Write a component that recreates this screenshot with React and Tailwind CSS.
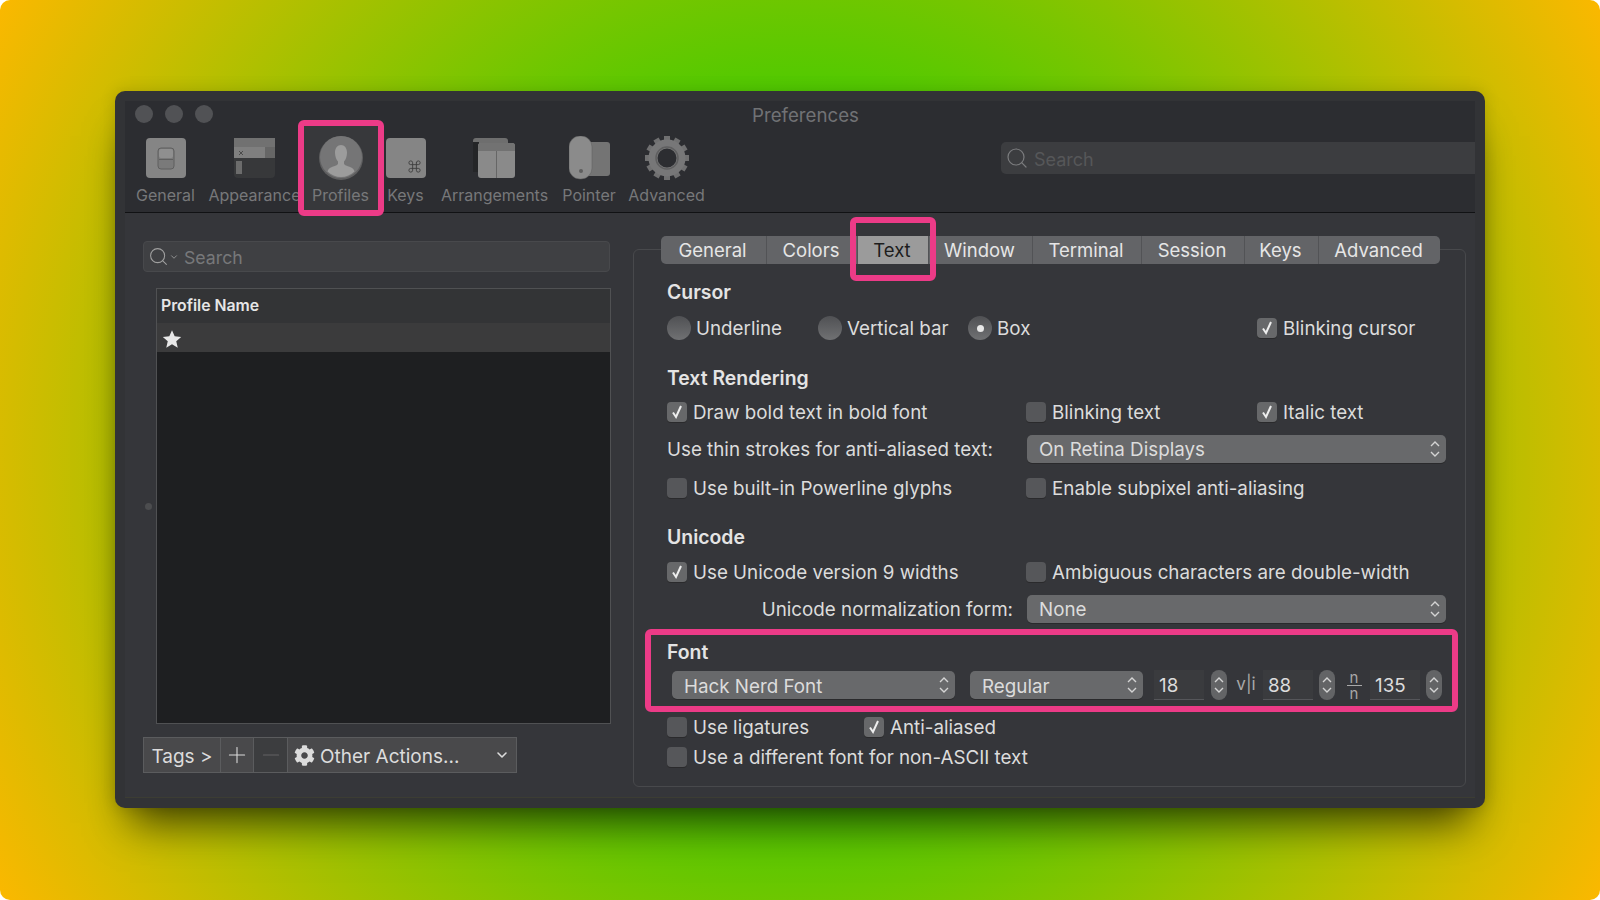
import React from 'react';
import { Command, Search, Plus, Minus, ChevronDown } from 'lucide-react';
import { FaCog } from 'react-icons/fa';

const GeneralIcon = () => (
  <svg width="40" height="40" viewBox="0 0 40 40">
    <rect width="40" height="40" rx="4" fill="#858585" />
    <rect x="12" y="10" width="16" height="21" rx="3" fill="#7a7a7a" stroke="#5f5f5f" />
    <rect x="13" y="11" width="14" height="9" rx="2" fill="#8f8f8f" />
    <rect x="13" y="21" width="14" height="1" fill="#5f5f5f" />
  </svg>
);

const AppearanceIcon = () => (
  <svg width="41" height="40" viewBox="0 0 41 40">
    <rect width="41" height="40" rx="4" fill="#37383a" />
    <path d="M0 20V4a4 4 0 0 1 4-4h33a4 4 0 0 1 4 4v16z" fill="#7f7f7f" />
    <rect y="0" width="41" height="9" fill="#717171" />
    <rect x="31" y="9" width="10" height="11" fill="#666" />
    <path d="M5 13l4 4M9 13l-4 4" stroke="#4a4a4a" />
    <rect x="2" y="23" width="6" height="13" fill="#6c6c6c" />
  </svg>
);

const ProfileIcon = () => (
  <svg width="44" height="44" viewBox="0 0 44 44">
    <circle cx="22" cy="22" r="22" fill="#5f5f60" />
    <circle cx="22" cy="21" r="21" fill="#757576" />
    <path d="M22 9c3.500 0 6 3 6 7.500 0 3.500-1 7-3 9v2c0 1.500 3 2.500 6 3.500 2.500 1 4 2 4.500 4.500C32 39 27 41 22 41s-10-2-13.500-5.500c.5-2.500 2-3.500 4.500-4.500 3-1 6-2 6-3.500v-2c-2-2-3-5.500-3-9C16 12 18.500 9 22 9z" fill="#9c9c9c" />
  </svg>
);

const KeysIcon = () => (
  <div className="w-10 h-10 rounded bg-[#858585] flex items-end justify-end pr-1 pb-1">
    <Command size={15} strokeWidth={1.4} className="text-[#3d3d3d]" />
  </div>
);

const ArrangementsIcon = () => (
  <svg width="43" height="40" viewBox="0 0 43 40">
    <rect x="0" y="0" width="35" height="34" rx="3" fill="#6e6e6e" />
    <rect x="0" y="4" width="6" height="30" fill="#242527" />
    <rect x="5" y="5" width="37" height="35" rx="3" fill="#8a8a8a" />
    <path d="M5 8a3 3 0 0 1 3-3h31a3 3 0 0 1 3 3v5H5z" fill="#727272" />
    <rect x="23" y="13" width="1" height="27" fill="#666" />
  </svg>
);

const PointerIcon = () => (
  <svg width="41" height="44" viewBox="0 0 41 44">
    <rect x="16" y="6" width="25" height="34" rx="3" fill="#747474" />
    <rect x="0" y="0" width="23" height="43" rx="11" fill="#8b8b8b" stroke="#5e5e5e" strokeWidth="0.5" />
    <circle cx="12" cy="35" r="2" fill="#5e5e5e" />
  </svg>
);

const GearIcon = () => (
  <svg width="44" height="44" viewBox="0 0 44 44">
    {[0, 30, 60, 90, 120, 150, 180, 210, 240, 270, 300, 330].map((deg) => (
      <rect key={deg} x="19" y="0" width="6" height="9" fill="#707071" transform={`rotate(${deg} 22 22)`} />
    ))}
    <circle cx="22" cy="22" r="14" fill="none" stroke="#777778" strokeWidth="9" />
    <circle cx="22" cy="22" r="11" fill="none" stroke="#5f5f60" strokeWidth="1.5" />
  </svg>
);

const toolbarItems = [
  { label: 'General', width: 'w-[71px]', icon: GeneralIcon },
  { label: 'Appearance', width: 'w-[107px]', icon: AppearanceIcon },
  { label: 'Profiles', width: 'w-[75px] -mx-[5px] bg-[#37383b]', icon: ProfileIcon },
  { label: 'Keys', width: 'w-[65px]', icon: KeysIcon },
  { label: 'Arrangements', width: 'w-[113px]', icon: ArrangementsIcon },
  { label: 'Pointer', width: 'w-[76px]', icon: PointerIcon },
  { label: 'Advanced', width: 'w-[79px]', icon: GearIcon },
];

const tabs = [
  { label: 'General', width: 'w-[105px]' },
  { label: 'Colors', width: 'w-[91px]' },
  { label: 'Text', width: 'w-[71px]', active: true },
  { label: 'Window', width: 'w-[104px]' },
  { label: 'Terminal', width: 'w-[109px]' },
  { label: 'Session', width: 'w-[103px]' },
  { label: 'Keys', width: 'w-[74px]' },
  { label: 'Advanced', width: 'w-[122px]' },
];

const Carets = () => (
  <svg width="12" height="20" viewBox="0 0 12 20" fill="none" stroke="#d4d4d4" strokeWidth="1.4">
    <path d="M2 7l4-4 4 4M2 13l4 4 4-4" />
  </svg>
);

const Box = ({ checked }) => (
  <div className={`w-5 h-5 shrink-0 rounded-[4px] flex items-center justify-center shadow-[0_1px_0_#2a2a2c] ${checked ? 'bg-[#67686a]' : 'bg-[#56575a]'}`}>
    {checked && (
      <svg width="12" height="16" viewBox="0 0 12 16" fill="none" stroke="#eeeeee" strokeWidth="2">
        <path d="M2 8.500l3 4.500L10 2" />
      </svg>
    )}
  </div>
);

const CheckItem = ({ label, checked, width }) => (
  <div className={`flex items-center gap-[6px] ${width}`}>
    <Box checked={checked} />
    <span className="pt-[2px] whitespace-nowrap">{label}</span>
  </div>
);

const Radio = ({ label, checked, width }) => (
  <div className={`flex items-center gap-[5px] ${width}`}>
    <div className="w-6 h-6 shrink-0 rounded-full bg-gradient-to-b from-[#505154] to-[#707173] flex items-center justify-center">
      {checked && <div className="w-[7px] h-[7px] rounded-full bg-[#e8e8e8]" />}
    </div>
    <span className="pt-[2px] whitespace-nowrap">{label}</span>
  </div>
);

const Select = ({ label, width, textPad = 'pt-[2px]' }) => (
  <div className={`h-7 shrink-0 rounded-[5px] bg-[#68696b] shadow-[0_1px_0_#2a2a2c] flex items-center justify-between pl-3 pr-[5px] ${width}`}>
    <span className={`whitespace-nowrap ${textPad}`}>{label}</span>
    <Carets />
  </div>
);

const Stepper = () => (
  <div className="w-4 h-[30px] shrink-0 rounded-full bg-[#636466] flex items-center justify-center">
    <Carets />
  </div>
);

const Field = ({ value }) => (
  <div className="w-[50px] h-[30px] shrink-0 bg-[#3a3b3e] border-b border-[#55565a] pl-[5px] pt-[4px] flex items-center">{value}</div>
);

const Heading = ({ children, className }) => (
  <div className={`h-6 pt-[2px] flex items-center font-semibold text-[19.400px] text-[#e4e4e4] ${className}`}>{children}</div>
);

const Row = ({ children, className }) => (
  <div className={`h-6 flex items-center ${className}`}>{children}</div>
);

const Highlight = ({ className }) => (
  <div className={`absolute border-[6px] border-[#ec3b87] rounded-[6px] ${className}`} />
);

export default function App() {
  return (
    <div className="w-[1600px] h-[900px] bg-white">
      <div
        className="w-full h-full overflow-hidden rounded-[10px] pt-[91px] pl-[115px] bg-[radial-gradient(circle_at_center,#00d200_10%,#fbb800_100%)]"
        style={{ fontFamily: 'Inter, "Noto Sans", sans-serif' }}
      >
        <div className="relative w-[1370px] h-[717px] rounded-[10px] bg-[#323336] pt-[10px] px-[10px] shadow-[0_30px_40px_-15px_rgba(0,0,0,0.65),0_0_16px_rgba(0,0,0,0.15)]">
          {/* Toolbar */}
          <div className="h-[112px] bg-[#2c2d31] border-b border-[#111214]">
            <div className="h-[25px] flex items-center pl-[10px]">
              <div className="flex gap-3">
                <div className="w-[18px] h-[18px] rounded-full bg-[#515255]" />
                <div className="w-[18px] h-[18px] rounded-full bg-[#515255]" />
                <div className="w-[18px] h-[18px] rounded-full bg-[#515255]" />
              </div>
              <div className="ml-[539px] pt-[6px] text-[#717275] text-[18.700px]">Preferences</div>
            </div>
            <div className="flex items-start pl-[5px]">
              {toolbarItems.map((item) => {
                const Icon = item.icon;
                return (
                  <div key={item.label} className={`h-[84px] shrink-0 flex flex-col items-center ${item.width}`}>
                    <div className="h-11 mt-[10px] flex items-center">
                      <Icon />
                    </div>
                    <div className="mt-[5px] text-[16px] leading-5 text-[#77787a] whitespace-nowrap">{item.label}</div>
                  </div>
                );
              })}
              <div className="ml-auto mt-4 w-[474px] h-8 rounded-l-[5px] bg-[#3c3d40] flex items-center pl-1 gap-[5px] text-[#565759] text-[18px]">
                <Search size={24} strokeWidth={1.2} className="text-[#7b7c7e]" />
                <span className="pt-[2px]">Search</span>
              </div>
            </div>
          </div>

          {/* Content */}
          <div className="h-[585px] flex bg-[#35363a] border-b border-[#3c3d33]">
            <div className="w-[508px] shrink-0 pl-[18px] pt-[28px]">
              <div className="w-[467px] h-[31px] rounded-[4px] bg-[#3f4043] border border-[#48494c] flex items-center pl-1 text-[#77787a] text-[17.700px]">
                <Search size={21} strokeWidth={1.2} className="text-[#a0a0a0]" />
                <ChevronDown size={10} className="text-[#a0a0a0] mr-[5px]" />
                <span className="pt-[4px]">Search</span>
              </div>

              <div className="mt-4 flex items-center">
                <div className="w-[13px]">
                  <div className="w-[7px] h-[7px] rounded-full bg-[#4c4d4f] ml-[2px]" />
                </div>
                <div className="w-[455px] h-[436px] bg-[#1e1f21] border border-[#505153]">
                  <div className="h-[34px] bg-[#333436] flex items-center pl-[4px] pb-[1px] text-[#e6e6e6] text-[15.800px] font-semibold">
                    Profile Name
                  </div>
                  <div className="h-[29px] bg-[#3b3b3c] flex items-center pl-[5px] pt-[3px]">
                    <svg width="20" height="20" viewBox="0 0 24 24" fill="#e8e8e8">
                      <path d="M12 1.500l3.200 7.200 7.800.8-5.900 5.200 1.800 7.700L12 18.300l-6.900 4.100 1.800-7.700L1 9.500l7.800-.8z" />
                    </svg>
                  </div>
                </div>
              </div>

              <div className="mt-[13px] flex h-9 text-[19px] text-[#dcdcdc]">
                <div className="w-[78px] pt-[4px] bg-[#49494b] border border-[#5b5c5e] flex items-center justify-center">Tags &gt;</div>
                <div className="w-[33px] bg-[#49494b] border border-l-0 border-[#5b5c5e] flex items-center justify-center">
                  <Plus size={26} strokeWidth={1} />
                </div>
                <div className="w-[34px] bg-[#3c3d3f] border border-l-0 border-[#5b5c5e] flex items-center justify-center">
                  <Minus size={26} strokeWidth={1} className="text-[#626365]" />
                </div>
                <div className="w-[229px] bg-[#49494b] border border-l-0 border-[#5b5c5e] flex items-center pl-[6px] pr-[6px]">
                  <FaCog size={21} />
                  <span className="ml-[5px] pt-[4px]">Other Actions...</span>
                  <ChevronDown size={16} strokeWidth={2.4} className="ml-auto" />
                </div>
              </div>
            </div>

            {/* Text settings */}
            <div className="w-[833px] h-[538px] mt-[36px] rounded-[6px] border border-[#48494c] text-[18.800px] text-[#dcdcdc] pl-[33px]">
              <div className="-mt-[14px] -ml-[6px] w-fit flex h-7 rounded-[5px] overflow-hidden bg-[#636467] text-[#e6e6e6] text-[18.500px]">
                {tabs.map((tab, i) => (
                  <div
                    key={tab.label}
                    className={`flex items-center justify-center pt-[2px] pr-[2px] ${tab.width} ${tab.active ? 'bg-[#9b9b9b] text-[#1d1d1d]' : ''} ${i > 0 ? 'border-l border-[#525356]' : ''}`}
                  >
                    {tab.label}
                  </div>
                ))}
              </div>

              <Heading className="mt-4">Cursor</Heading>
              <Row className="mt-3">
                <Radio label="Underline" width="w-[151px]" />
                <Radio label="Vertical bar" width="w-[150px]" />
                <Radio label="Box" checked width="w-[289px]" />
                <CheckItem label="Blinking cursor" checked />
              </Row>

              <Heading className="mt-[26px]">Text Rendering</Heading>
              <Row className="mt-[10px]">
                <CheckItem label="Draw bold text in bold font" checked width="w-[359px]" />
                <CheckItem label="Blinking text" width="w-[231px]" />
                <CheckItem label="Italic text" checked />
              </Row>
              <Row className="mt-[13px]">
                <div className="w-[360px] pt-[2px] whitespace-nowrap">Use thin strokes for anti-aliased text:</div>
                <Select label="On Retina Displays" width="w-[419px]" />
              </Row>
              <Row className="mt-[15px]">
                <CheckItem label="Use built-in Powerline glyphs" width="w-[359px]" />
                <CheckItem label="Enable subpixel anti-aliasing" />
              </Row>

              <Heading className="mt-[25px]">Unicode</Heading>
              <Row className="mt-[11px]">
                <CheckItem label="Use Unicode version 9 widths" checked width="w-[359px]" />
                <CheckItem label="Ambiguous characters are double-width" />
              </Row>
              <Row className="mt-[13px]">
                <div className="w-[346px] pt-[2px] text-right whitespace-nowrap">Unicode normalization form:</div>
                <Select label="None" width="w-[419px] ml-[14px]" />
              </Row>

              <Heading className="mt-[19px]">Font</Heading>
              <Row className="mt-[9px] pl-[5px]">
                <Select label="Hack Nerd Font" width="w-[283px]" textPad="pt-[4px]" />
                <Select label="Regular" width="w-[173px] ml-[15px]" textPad="pt-[4px]" />
                <div className="ml-[11px]"><Field value="18" /></div>
                <div className="ml-[7px]"><Stepper /></div>
                <div className="w-[36px] pl-[2px] text-center text-[17px] text-[#a8a8a8]">v|i</div>
                <Field value="88" />
                <div className="ml-[6px]"><Stepper /></div>
                <div className="w-[35px] pl-[3px] flex flex-col items-center text-[15px] leading-[15px] text-[#a8a8a8]">
                  <span>n</span>
                  <div className="w-[15px] h-px bg-[#a8a8a8]" />
                  <span>n</span>
                </div>
                <Field value="135" />
                <div className="ml-[6px]"><Stepper /></div>
              </Row>

              <Row className="mt-[18px]">
                <CheckItem label="Use ligatures" width="w-[197px]" />
                <CheckItem label="Anti-aliased" checked />
              </Row>
              <Row className="mt-[6px]">
                <CheckItem label="Use a different font for non-ASCII text" />
              </Row>
            </div>
          </div>

          {/* Pink callouts */}
          <Highlight className="left-[183px] top-[29px] w-[86px] h-[96px]" />
          <Highlight className="left-[735px] top-[126px] w-[86px] h-[64px]" />
          <Highlight className="left-[530px] top-[538px] w-[813px] h-[83px]" />
        </div>
      </div>
    </div>
  );
}
